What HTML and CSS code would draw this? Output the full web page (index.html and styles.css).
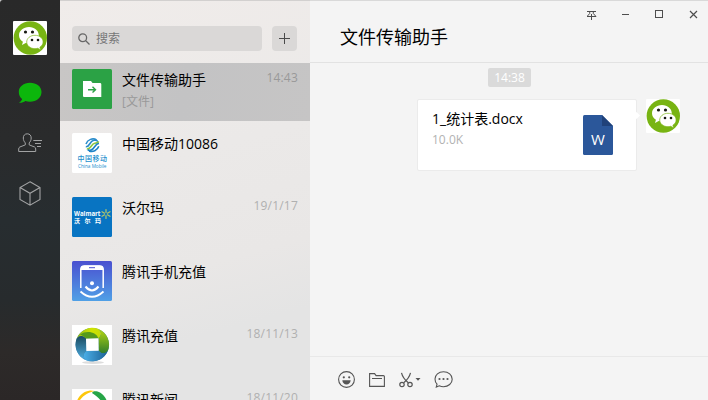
FILE: index.html
```html
<!DOCTYPE html>
<html lang="zh-CN">
<head>
<meta charset="utf-8">
<title>文件传输助手</title>
<link rel="stylesheet" href="styles.css">
</head>
<body>
<svg width="0" height="0" class="defs">
  <defs>
    <linearGradient id="phoneBg" x1="0" y1="0" x2="0" y2="1"><stop offset="0" stop-color="#4a50d0"/><stop offset="1" stop-color="#50a0e6"/></linearGradient>
    <linearGradient id="lime" x1="0" y1="0" x2="1" y2="0"><stop offset="0" stop-color="#8fb81b"/><stop offset=".6" stop-color="#d0e300"/><stop offset="1" stop-color="#c3dc08"/></linearGradient>
    <linearGradient id="green" x1="0" y1="0" x2="1" y2="0"><stop offset="0" stop-color="#b5d610"/><stop offset="1" stop-color="#2f7d2c"/></linearGradient>
    <linearGradient id="blue" x1="0" y1="0" x2="1" y2="0"><stop offset="0" stop-color="#1b5f94"/><stop offset="1" stop-color="#4aaee6"/></linearGradient>
    <linearGradient id="navy" x1="0" y1="0" x2="1" y2="0"><stop offset="0" stop-color="#4fb0e6"/><stop offset="1" stop-color="#1a4a5e"/></linearGradient>
    <symbol id="me" viewBox="0 0 34 34">
      <rect width="34" height="34" rx="1" fill="#fff"/>
      <circle cx="17.3" cy="17" r="16.7" fill="#78b413"/>
      <path d="M16 6C10.400 6 6 9.700 6 14.300c0 2.700 1.500 5 3.900 6.500L9 24l3.700-2c1 .3 2.100.4 3.300.4 5.600 0 9.800-3.600 9.800-8.100S21.600 6 16 6z" fill="#fff"/>
      <path d="M22 14.300c-4.700 0-8.300 3-8.300 6.700 0 3.700 3.600 6.700 8.300 6.700 1 0 1.900-.1 2.700-.4l3 1.600-.8-2.700c2-1.200 3.200-3.100 3.200-5.200 0-3.700-3.400-6.700-8.100-6.700z" fill="#fff" stroke="#78b413" stroke-width=".7"/>
      <g fill="#171b12"><circle cx="12.500" cy="11" r="1.600"/><circle cx="19.500" cy="11" r="1.600"/><circle cx="19" cy="19" r="1.300"/><circle cx="25" cy="19" r="1.300"/></g>
    </symbol>
  </defs>
</svg>
<div class="app">
  <nav class="rail">
    <svg class="me" width="34" height="34"><use href="#me"/></svg>
    <svg class="nav-chat" width="24" height="22" viewBox="0 0 24 22"><path d="M12 .8C5.600.8.800 4.800.800 10c0 3 1.300 5.400 3.300 7.100C3.800 18.700 2.700 19.700.800 20.800c2.400.3 5-.5 6.600-1.700 1.500.5 3 .7 4.600.7 6.400 0 11.500-4.200 11.500-9.800S18.400.8 12 .8z" fill="#0cb60c"/></svg>
    <svg class="nav-people" width="24" height="20" viewBox="0 0 24 20" fill="none" stroke="#a2a3a4"><path d="M9.300.8C6.700.8 5.300 2.600 5.300 5c0 2 .8 3.700 2 4.900v2L1.800 14Q.7 14.500.7 16v2.500h17V16q0-1.500-1.100-2L11.200 11.900v-2c1.200-1.200 2-2.900 2-4.900C13.200 2.600 11.800.8 9.300.8zM15.300 7.500H24M17 10.500h6M19 13.500h4"/></svg>
    <svg class="nav-box" width="22" height="25" viewBox="0 0 22 25" fill="none" stroke="#a2a3a4" stroke-width="1.100"><path d="M11 .8L21 6.500v12L11 24.200 1 18.500v-12zM1 6.500l10 5.800 10-5.800M11 12.300v11.900"/></svg>
  </nav>

  <aside class="side">
    <div class="search-row">
      <div class="search">
        <svg width="12" height="12" viewBox="0 0 12 12" fill="none" stroke="#666" stroke-width="1.300"><circle cx="4.700" cy="4.700" r="3.900"/><path d="M7.500 7.500l4 4"/></svg>
        <span>搜索</span>
      </div>
      <div class="add"><svg width="11" height="11" viewBox="0 0 11 11" stroke="#4a4a4a"><path d="M5.500 0v11M0 5.500h11"/></svg></div>
    </div>
    <ul class="chats">
      <li class="chat active">
        <svg class="avatar" viewBox="0 0 40 40"><rect width="40" height="40" rx="1.500" fill="#2ba245"/><path d="M11 12h8l1.500 2H28q1.300 0 1.300 1.300V28H12q-1 0-1-1z" fill="#fff"/><path d="M16 20.700h7M20.500 17.800l3 2.900-3 2.900" fill="none" stroke="#2ba245" stroke-width="1.400"/></svg>
        <div class="text"><div class="name">文件传输助手</div><div class="last">[文件]</div></div>
        <time>14:43</time>
      </li>
      <li class="chat">
        <svg class="avatar" viewBox="0 0 40 40"><rect width="40" height="40" rx="1.500" fill="#fff"/>
          <g fill="none" stroke-width="1.600"><path d="M14 11c1.500-4.500 7-6.500 10.500-4M13.800 13.800c4 .5 3.500-5.500 8-6.500 3-.6 4.200.6 3.700 2" stroke="#2a8ccb"/><path d="M14.800 16c4.500.5 4-5 8-5.700 2-.3 3.500-.8 3.700-2" stroke="#8cc63f"/><path d="M27 10.500c-4-.5-4 5.500-8 6.500-1.200.3-2.400.2-3.300-.3M26.800 13.300c-1.500 4.300-6 6.200-9.800 4.700" stroke="#1d82c6"/></g>
          <text class="cm-zh" x="5.500" y="28.200" textLength="29.500">中国移动</text><text class="cm-en" x="6" y="35" textLength="28.500" lengthAdjust="spacingAndGlyphs">China Mobile</text></svg>
        <div class="text"><div class="name">中国移动10086</div></div>
      </li>
      <li class="chat">
        <svg class="avatar" viewBox="0 0 40 40"><rect width="40" height="40" rx="1.500" fill="#0874c2"/>
          <text class="wm" x="2" y="19.300" textLength="26.500" lengthAdjust="spacingAndGlyphs">Walmart</text><text class="wm-zh" x="2" y="26" textLength="27">沃 尔 玛</text>
          <path d="M34 12.500v3M34 18.500v3M30 14.700l2.600 1.500M38 14.700l-2.600 1.500M30 19.300l2.600-1.500M38 19.300l-2.600-1.500" stroke="#b9c866" stroke-width="1.200" stroke-linecap="round"/></svg>
        <div class="text"><div class="name">沃尔玛</div></div>
        <time>19/1/17</time>
      </li>
      <li class="chat">
        <svg class="avatar" viewBox="0 0 40 40"><rect width="40" height="40" rx="1.500" fill="url(#phoneBg)"/>
          <g fill="none" stroke="#fff"><path d="M8.800 27V8.500Q8.800 5 12.300 5h15.400q3.500 0 3.500 3.500V27" stroke-width="1.500"/><path d="M9 8.500Q9 5 12.300 5h15.400Q31 5 31 8.500z" fill="#fff"/><path d="M13.500 25.500q6.500 8 13 0" stroke-width="2"/><path d="M8.500 30.500q11.500 10.500 23 0" stroke-width="1.800"/></g><path d="M17 6.700h6" stroke="#4a50d0"/><circle cx="20" cy="22.300" r="2" fill="#fff"/></svg>
        <div class="text"><div class="name">腾讯手机充值</div></div>
      </li>
      <li class="chat">
        <svg class="avatar" viewBox="0 0 40 40"><rect width="40" height="40" fill="#fff"/>
          <ellipse cx="21" cy="37.500" rx="11" ry="1.500" fill="#ddd"/>
          <circle cx="20.300" cy="19.600" r="16.700" fill="#2f7fb5"/>
          <path d="M14 13.500C11 10 7 10 4.500 14A16.800 16.800 0 0 1 25.900 3.800C29.900 6.300 29.900 10.300 26.400 13.300z" fill="url(#lime)"/>
          <path d="M14 13.500C11 10 7 10 4.500 14A16.800 16.800 0 0 1 25.900 3.800C29.900 6.300 29.900 10.300 26.400 13.300z" fill="url(#green)" transform="rotate(90 20.300 19.600)"/>
          <path d="M14 13.500C11 10 7 10 4.500 14A16.800 16.800 0 0 1 25.900 3.800C29.900 6.300 29.900 10.300 26.400 13.300z" fill="url(#blue)" transform="rotate(180 20.300 19.600)"/>
          <path d="M14 13.500C11 10 7 10 4.500 14A16.800 16.800 0 0 1 25.900 3.800C29.900 6.300 29.900 10.300 26.400 13.300z" fill="url(#navy)" transform="rotate(270 20.300 19.600)"/>
          <path d="M8 9.500c7-5 17-2 18.400 4H14c-1.500-2-3.500-3-6-4z" fill="#559a1c"/>
          <path d="M14 13.700l12.500-.4.200 12.500L14.300 26z" fill="#fff"/></svg>
        <div class="text"><div class="name">腾讯充值</div></div>
        <time>18/11/13</time>
      </li>
      <li class="chat">
        <svg class="avatar" viewBox="0 0 40 40"><rect width="40" height="40" fill="#fff"/><path d="M3 20C4 9 10 2.500 18 1.500l5 .5C14 4 8 8 3 20z" fill="#fdc70c"/><path d="M20 4c1-2.500 5-2 8-.5 5 3 8 9 8 14h-5C30 11 26 8 20 4z" fill="#26a547"/></svg>
        <div class="text"><div class="name">腾讯新闻</div></div>
        <time>18/11/20</time>
      </li>
    </ul>
  </aside>

  <main class="main">
    <header class="head">
      <h1>文件传输助手</h1>
      <svg class="controls" width="112" height="12" viewBox="0 0 112 12" fill="none" stroke="#4d4d4d"><path d="M0 2.500h9M2.700 3v1.500L0 7.500h9L6.300 4.500V3M4.500 5v6M35 5.500h7"/><rect x="68.500" y="1.500" width="7" height="7"/><path d="M103 2l7 7M110 2l-7 7" stroke-width="1.200"/></svg>
    </header>
    <section class="messages">
      <div class="stamp">14:38</div>
      <div class="message">
        <div class="file">
          <div><div class="file-name">1_统计表.docx</div><div class="size">10.0K</div></div>
          <svg class="doc" width="30" height="40" viewBox="0 0 30 40"><path d="M1.500 0H19l11 11v27.500q0 1.500-1.500 1.500h-27Q0 40 0 38.500v-37Q0 0 1.500 0z" fill="#2b579a"/><path d="M19 0l11 11H19z" fill="#20427a"/><text class="w" x="15" y="30" text-anchor="middle">W</text></svg>
        </div>
        <svg width="34" height="34"><use href="#me"/></svg>
      </div>
    </section>
    <footer class="tools">
      <svg width="17" height="17" viewBox="0 0 17 17"><circle cx="8.500" cy="8.500" r="7.900" fill="none" stroke="#555" stroke-width="1.100"/><circle cx="5.800" cy="6.300" r="1.100" fill="#555"/><circle cx="11.200" cy="6.300" r="1.100" fill="#555"/><path d="M4.300 9.200h8.400c-.2 2.600-1.900 4.300-4.200 4.300s-4-1.700-4.200-4.300z" fill="#555"/></svg>
      <svg class="t-folder" width="16" height="14" viewBox="0 0 16 14" fill="none" stroke="#555" stroke-width="1.100"><path d="M.6 13.400V.6h5l1.500 2h7.300q1 0 1 1v9.800zM3 5.500h10"/></svg>
      <svg class="t-cut" width="22" height="16" viewBox="0 0 22 16" fill="none" stroke="#555" stroke-width="1.200"><path d="M2.500.8C3.300 4 6 8 9.300 10.700M11.500.8C10.700 4 8 8 4.700 10.700"/><circle cx="3" cy="12.500" r="2.200"/><circle cx="11" cy="12.500" r="2.200"/><path d="M16.500 6h5L19 8.800z" fill="#555" stroke="none"/></svg>
      <svg class="t-chat" width="19" height="17" viewBox="0 0 19 17"><path d="M9.500.8C4.600.8 1 4 1 8c0 2.100.8 3.900 2 5.200L2.300 16l3-1.200c1.300.6 2.700.9 4.200.9 4.900 0 8.700-3.300 8.700-7.500S14.400.8 9.500.8z" fill="none" stroke="#555" stroke-width="1.100"/><g fill="#555"><circle cx="5.500" cy="8" r="1.100"/><circle cx="9.500" cy="8" r="1.100"/><circle cx="13.500" cy="8" r="1.100"/></g></svg>
    </footer>
  </main>
</div>
</body>
</html>
```
FILE: styles.css
```css
* { box-sizing: border-box; }
body { margin: 0; font-family: "Open Sans", "Noto Sans CJK SC", sans-serif; color: #000; }
.defs { position: absolute; }
.app { display: grid; grid-template-columns: 60px 250px 1fr; height: 400px; overflow: hidden; background: #f4f4f4; box-shadow: inset 0 1px #d4d4d4; }
svg { display: block; flex: none; }

.rail { display: flex; flex-direction: column; align-items: center; padding-top: 21px; background: linear-gradient(#292929 0, #2a2b2c 35%, #272d30 55%, #272b2d 75%, #2d2a29 88%, #2b2727); border-top-left-radius: 3px; }
.nav-chat { margin-top: 27px; }
.nav-people { margin: 29px 0 0 0; }
.nav-box { margin-top: 28px; }

.side { background: linear-gradient(165deg, #f0ecea 0, #ebe9e8 40%, #e9e7e6 65%, #e4e4e4 80%, #e4e4e4); box-shadow: inset 0 1px #d2d0cf; overflow: hidden; }
.search-row { display: flex; gap: 10px; padding: 26px 13px 12px 12px; height: 63px; }
.search { flex: 1; display: flex; align-items: center; gap: 6px; padding-left: 6px; background: #dad8d7; border-radius: 4px; font-size: 12px; line-height: 25px; color: #777; }
.add { width: 25px; display: grid; place-items: center; background: #dad8d7; border-radius: 4px; }

.chats { list-style: none; margin: 0; padding: 0; display: flex; flex-direction: column; gap: 6px; }
.chat { display: flex; height: 58px; padding: 6px 12px; }
.chat.active { background: linear-gradient(100deg, #c8c6c5, #c3c3c4 50%, #c6c5c5); }
.avatar { width: 40px; height: 40px; }
.text { flex: 1; padding-left: 10px; }
.name { font-size: 14px; line-height: 22px; white-space: nowrap; }
.last { font-size: 12px; line-height: 21px; color: #999; }
time { font-size: 12px; line-height: 18px; color: #b0b0b0; letter-spacing: .2px; }
.active time { color: #999; }

.cm-zh { font-size: 7px; font-weight: 500; fill: #238fce; }
.cm-en { font-size: 5px; fill: #238fce; }
.wm { font-size: 7.500px; font-weight: 700; fill: #fff; }
.wm-zh { font-size: 6px; font-weight: 700; fill: #fff; }

.main { display: flex; flex-direction: column; border-top: 1px solid #d9d9d9; }
.head { display: flex; justify-content: space-between; height: 62px; padding: 8px 9px 0 30px; border-bottom: 1px solid #e2e2e2; }
h1 { margin: 14px 0 0; font-size: 18px; font-weight: 400; line-height: 28px; }
.messages { flex: 1; padding: 5px 28px 0 0; }
.stamp { width: 43px; height: 19px; margin-left: 178px; border-radius: 2px; background: #dadada; color: #fff; font-size: 12px; line-height: 19px; text-align: center; }
.message { display: flex; justify-content: flex-end; gap: 9px; margin-top: 12px; }
.file { position: relative; display: flex; justify-content: space-between; width: 220px; height: 72px; padding: 8px 23px 0 14px; border: 1px solid #ebebeb; border-radius: 2px; background: #fff; }
.file::after { content: ""; position: absolute; right: -3px; top: 13px; width: 5px; height: 5px; background: #fff; transform: rotate(45deg); }
.file-name { font-size: 14px; line-height: 22px; }
.size { font-size: 12px; line-height: 20px; color: #b2b2b2; }
.doc { margin-top: 7px; }
.w { font-size: 15px; fill: #fff; }
.tools { display: flex; align-items: center; height: 44px; padding: 2px 0 0 28px; border-top: 1px solid #e8e8e8; }
.t-folder { margin-left: 14px; }
.t-cut { margin-left: 14px; }
.t-chat { margin-left: 13px; }
```
